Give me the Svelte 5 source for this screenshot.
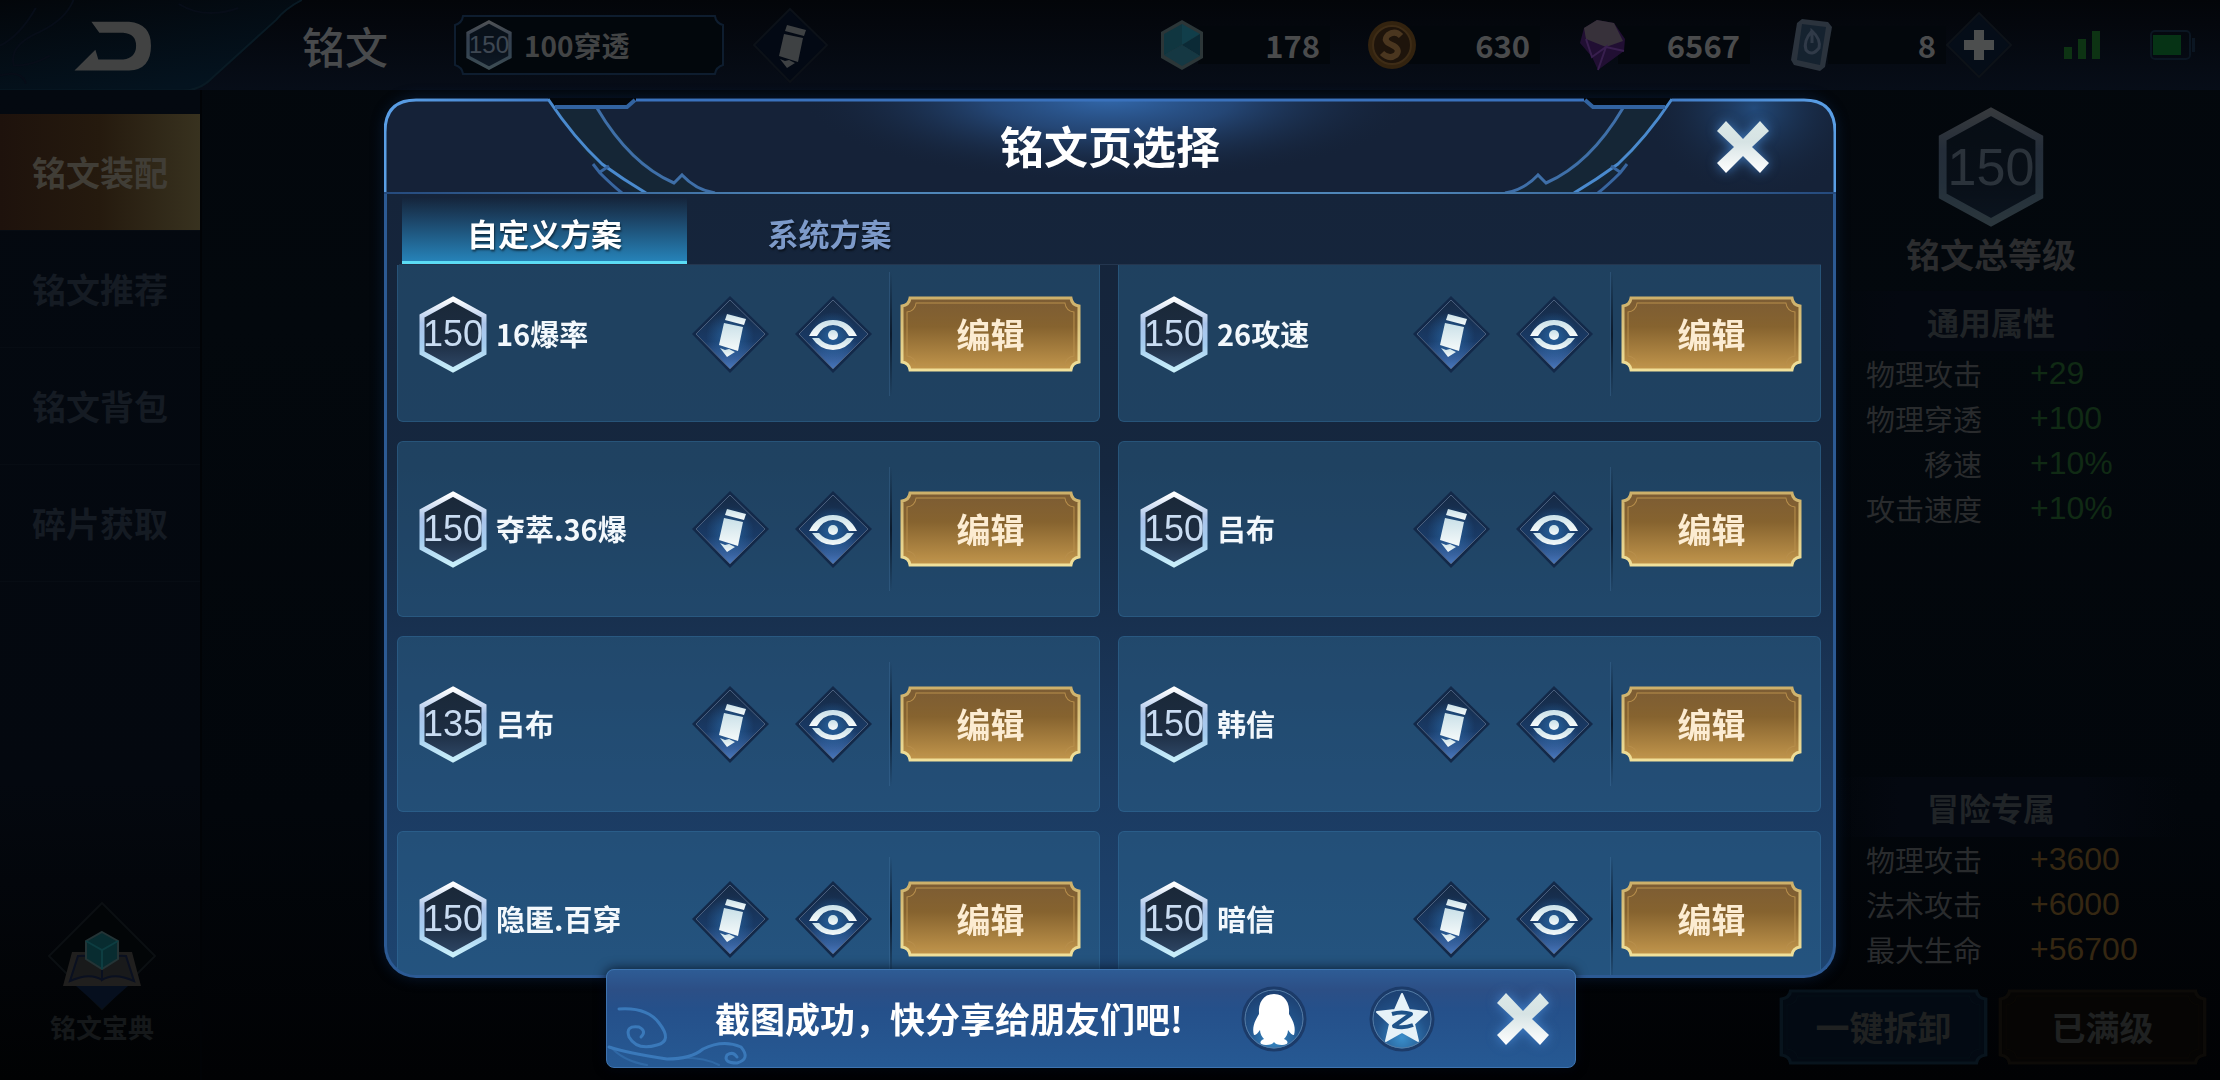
<script lang="ts">
    import { onMount } from "svelte"

    type Page = { level: number; name: string }
    type Stat = { label: string; value: string }

    const menu = ["铭文装配", "铭文推荐", "铭文背包", "碎片获取"]
    const tabs = ["自定义方案", "系统方案"]

    const pages: Page[] = [
        {level: 150, name: "16爆率"},
        {level: 150, name: "26攻速"},
        {level: 150, name: "夺萃.36爆"},
        {level: 150, name: "吕布"},
        {level: 135, name: "吕布"},
        {level: 150, name: "韩信"},
        {level: 150, name: "隐匿.百穿"},
        {level: 150, name: "暗信"},
    ]

    const common: Stat[] = [
        {label: "物理攻击", value: "+29"},
        {label: "物理穿透", value: "+100"},
        {label: "移速", value: "+10%"},
        {label: "攻击速度", value: "+10%"},
    ]

    const adventure: Stat[] = [
        {label: "物理攻击", value: "+3600"},
        {label: "法术攻击", value: "+6000"},
        {label: "最大生命", value: "+56700"},
    ]

    let activeMenu = $state(0)
    let activeTab = $state(0)
    let modalOpen = $state(true)
    let toastOpen = $state(true)
    let list: HTMLUListElement | undefined = $state()

    onMount(() => {
        if (list) list.scrollTop = 19
    })
</script>


{#snippet hexagon()}
    <svg class="hex-shape" viewBox="0 0 68 77" preserveAspectRatio="none" aria-hidden="true">
        <polygon points="34,3 65,20 65,57 34,74 3,57 3,20" fill="url(#hex-fill)" stroke="url(#hex-line)" stroke-width="5" />
    </svg>
{/snippet}

{#snippet diamond()}
    <polygon points="38,0 77,38 38,77 0,38" fill="#132949" />
    <polygon points="38,4 73,38 38,73 4,38" fill="url(#diamond-fill)" stroke="#4b5f7d" stroke-width="1" />
    <circle cx="38" cy="40" r="24" fill="url(#icon-glow)" />
{/snippet}

{#snippet pencil()}
    <svg class="diamond" viewBox="0 0 77 77" aria-hidden="true">
        {@render diamond()}
        <g fill="url(#icon-fill)">
            <path d="M35 18L54 23L52 29L33 24Z" />
            <path d="M32 27L51 31L46 55L27 49Z" />
            <path d="M28 52L33 54L37 53L43 56L35 61Z" />
        </g>
    </svg>
{/snippet}

{#snippet eye()}
    <svg class="diamond" viewBox="0 0 77 77" aria-hidden="true">
        {@render diamond()}
        <g fill="url(#icon-fill)">
            <path d="M14 40Q22 24 38 24Q54 24 62 40H54Q48 29 38 29Q28 29 22 40Z" />
            <path d="M17 42H24Q30 49 38 49Q46 49 52 42H59Q51 54 38 54Q25 54 17 42Z" />
            <circle cx="38" cy="39" r="5" />
        </g>
    </svg>
{/snippet}

{#snippet cross()}
    <svg class="cross" viewBox="0 0 52 52" aria-hidden="true">
        <path d="M9 0L26 18L43 0L52 10L35 26L52 42L43 52L26 35L9 52L0 42L17 26L0 10Z" fill="url(#cross-fill)" />
    </svg>
{/snippet}

{#snippet plate(fill: string, line: string, inner: string)}
    <svg class="plate" viewBox="0 0 180 76" preserveAspectRatio="none" aria-hidden="true">
        <path d="M10 2H170Q171 9 178 10V66Q171 67 170 74H10Q9 67 2 66V10Q9 9 10 2Z" fill={fill} stroke={line} stroke-width="3" />
        <path d="M16 7H164Q165 15 173 16V60Q165 61 164 69H16Q15 61 7 60V16Q15 15 16 7Z" fill="none" stroke={inner} stroke-width="1" />
    </svg>
{/snippet}

{#snippet stats(title: string, rows: Stat[], kind: string)}
    <section class="stats {kind}">
        <h3>{title}</h3>
        <dl>
            {#each rows as row}
                <div>
                    <dt>{row.label}</dt>
                    <dd>{row.value}</dd>
                </div>
            {/each}
        </dl>
    </section>
{/snippet}


<svg class="defs" aria-hidden="true">
    <defs>
        <linearGradient id="hex-line" x1="0" y1="0" x2="0" y2="1">
            <stop offset="0" stop-color="#ffffff" />
            <stop offset=".35" stop-color="#a9c3ea" />
            <stop offset=".65" stop-color="#a5cdf0" />
            <stop offset="1" stop-color="#c9effa" />
        </linearGradient>
        <linearGradient id="hex-fill" x1="0" y1="0" x2="0" y2="1">
            <stop offset="0" stop-color="#1a2838" />
            <stop offset=".6" stop-color="#1d2d42" />
            <stop offset="1" stop-color="#2f4867" />
        </linearGradient>
        <linearGradient id="diamond-fill" x1="0" y1="0" x2="0" y2="1">
            <stop offset="0" stop-color="#162a45" />
            <stop offset=".6" stop-color="#193a66" />
            <stop offset="1" stop-color="#4877bd" />
        </linearGradient>
        <radialGradient id="icon-glow">
            <stop offset="0" stop-color="#2f7cc4" stop-opacity=".6" />
            <stop offset="1" stop-color="#2f7cc4" stop-opacity="0" />
        </radialGradient>
        <linearGradient id="icon-fill" x1="0" y1="0" x2="0" y2="1">
            <stop offset="0" stop-color="#c9e0e8" />
            <stop offset="1" stop-color="#f6fafa" />
        </linearGradient>
        <linearGradient id="cross-fill" x1="0" y1="0" x2="0" y2="1">
            <stop offset="0" stop-color="#dbe8e6" />
            <stop offset=".4" stop-color="#d6e3e4" />
            <stop offset="1" stop-color="#ffffff" />
        </linearGradient>
        <linearGradient id="gold" x1="0" y1="0" x2="0" y2="1">
            <stop offset="0" stop-color="#7c5c34" />
            <stop offset=".4" stop-color="#86632f" />
            <stop offset="1" stop-color="#c2964c" />
        </linearGradient>
        <linearGradient id="gold-line" x1="0" y1="0" x2="0" y2="1">
            <stop offset="0" stop-color="#cdb06a" />
            <stop offset="1" stop-color="#f0e09a" />
        </linearGradient>
        <radialGradient id="badge-fill" cx=".5" cy=".8" r=".7">
            <stop offset="0" stop-color="#3a8fcb" />
            <stop offset=".6" stop-color="#225289" />
            <stop offset="1" stop-color="#1d4274" />
        </radialGradient>
    </defs>
</svg>

<div class="screen">
    <header>
        <button class="back" aria-label="返回">
            <svg viewBox="0 0 304 92" aria-hidden="true">
                <defs>
                    <linearGradient id="back-fill" x1="0" y1="0" x2=".5" y2="1">
                        <stop offset="0" stop-color="#03060a" />
                        <stop offset="1" stop-color="#04131f" />
                    </linearGradient>
                </defs>
                <path d="M0 0H304Q288 8 278 20L214 78Q202 91 184 91H0Z" fill="url(#back-fill)" />
                <path d="M304 0Q288 8 278 20L214 78Q202 91 184 91H0" fill="none" stroke="#091a24" stroke-width="2" />
                <path d="M74 0Q66 20 40 32Q8 46 14 66Q34 66 50 56M0 46Q20 36 36 8M0 76Q22 70 26 84M180 4Q206 20 240 8" fill="none" stroke="#070d18" stroke-width="2" />
                <path d="M92 22H130Q152 24 152 46Q152 70 130 71H75L96 50L99 60H124Q137 58 137 46Q137 34 124 33H100Z" fill="#414242" />
            </svg>
        </button>
        <h1>铭文</h1>
        <button class="current">
            <svg class="frame" viewBox="0 0 268 60" preserveAspectRatio="none" aria-hidden="true">
                <path d="M9 1H259Q260 8 267 10V50Q260 52 259 59H9Q8 52 1 50V10Q8 8 9 1Z" fill="#02070c" stroke="#0e1d2f" stroke-width="2" />
            </svg>
            <span class="level small">{@render hexagon()}<b>150</b></span>
            <span class="current-name">100穿透</span>
        </button>
        <button class="rename" aria-label="重命名">
            <svg viewBox="0 0 77 77" aria-hidden="true">
                <polygon points="38,2 75,38 38,75 2,38" fill="#030914" stroke="#0c1118" stroke-width="2" />
                <g fill="#3e4143">
                    <path d="M35 18L54 23L52 29L33 24Z" />
                    <path d="M32 27L51 31L46 55L27 49Z" />
                    <path d="M28 52L33 54L37 53L43 56L35 61Z" />
                </g>
            </svg>
        </button>

        <ul class="wallet">
            <li>
                <svg viewBox="0 0 48 52" aria-hidden="true">
                    <polygon points="24,1 45,13 45,39 24,51 3,39 3,13" fill="#2c3638" />
                    <polygon points="24,5 24,26 6,36 6,15" fill="#103640" />
                    <polygon points="24,5 42,15 24,26" fill="#113e4a" />
                    <polygon points="42,15 42,37 24,26" fill="#0b2a36" />
                    <polygon points="24,26 42,37 24,47 6,36" fill="#153843" />
                </svg>
                <span>178</span>
            </li>
            <li>
                <svg viewBox="0 0 48 52" aria-hidden="true">
                    <circle cx="24" cy="26" r="24" fill="#33230f" />
                    <circle cx="24" cy="26" r="19" fill="#1e140b" stroke="#3e2c16" stroke-width="2" />
                    <path d="M33 17Q27 11 20 16Q14 22 24 26Q33 30 28 36Q21 41 14 34" fill="none" stroke="#4a361f" stroke-width="6" />
                </svg>
                <span>630</span>
            </li>
            <li>
                <svg viewBox="0 0 48 52" aria-hidden="true">
                    <polygon points="6,9 19,1 36,4 47,20 46,32 20,51 14,38 2,24" fill="#210f33" />
                    <polygon points="6,9 19,1 36,4 45,22 28,28 8,20" fill="#37313a" />
                    <path d="M8 20L14 38L28 28L20 51M28 28L46 32" fill="none" stroke="#381f4e" stroke-width="2" />
                </svg>
                <span>6567</span>
            </li>
            <li class="last">
                <svg viewBox="0 0 48 52" aria-hidden="true">
                    <polygon points="14,0 40,3 44,8 37,48 32,52 6,46 3,41 9,4" fill="#2b333d" />
                    <polygon points="14,5 38,8 32,46 9,41" fill="#15222f" />
                    <path d="M24 12Q15 22 18 31Q24 38 31 29Q33 20 24 12V24" fill="none" stroke="#303a48" stroke-width="3" />
                </svg>
                <span>8</span>
            </li>
        </ul>
        <button class="add" aria-label="增加">
            <svg viewBox="0 0 66 66" aria-hidden="true">
                <polygon points="33,1 65,33 33,65 1,33" fill="#050d18" stroke="#0d1218" stroke-width="2" />
                <path d="M28 18H38V28H48V38H38V48H28V38H18V28H28Z" fill="#4c4e4e" />
            </svg>
        </button>
        <svg class="signal" viewBox="0 0 38 28" aria-hidden="true">
            <path d="M0 16H8V28H0ZM14 8H22V28H14ZM28 0H36V28H28Z" fill="#0d3313" />
        </svg>
        <svg class="battery" viewBox="0 0 46 30" aria-hidden="true">
            <rect x="1" y="1" width="39" height="28" rx="4" fill="none" stroke="#0b1622" stroke-width="2" />
            <rect x="42" y="8" width="3" height="14" fill="#0b1622" />
            <rect x="3" y="5" width="28" height="20" fill="#063315" />
        </svg>
    </header>

    <div class="content">
        <nav>
            {#each menu as item, i}
                <button class:active={activeMenu == i} onclick={() => activeMenu = i}>{item}</button>
            {/each}
            <a class="codex" href="#codex">
                <svg viewBox="0 0 116 116" aria-hidden="true">
                    <polygon points="58,5 111,58 58,111 5,58" fill="#020507" stroke="#0b0f12" stroke-width="2" />
                    <polygon points="58,111 32,88 84,88" fill="#060f1e" />
                    <path d="M28 54H88L97 88H19Z" fill="#201f1e" />
                    <path d="M58 82Q46 74 26 83L34 58Q50 56 58 66Q66 56 82 58L90 83Q70 74 58 82V64" fill="#191a1b" stroke="#0a1020" stroke-width="2" />
                    <polygon points="58,34 74,43 74,61 58,71 42,61 42,43" fill="#082c30" stroke="#243436" stroke-width="2" />
                    <path d="M42 43L58 52L74 43M58 52V71" fill="none" stroke="#0d3d41" stroke-width="2" />
                </svg>
                <span>铭文宝典</span>
            </a>
        </nav>

        <aside>
            <div class="total">
                <span class="level large">{@render hexagon()}<b>150</b></span>
                <h2>铭文总等级</h2>
            </div>
            {@render stats("通用属性", common, "common")}
            {@render stats("冒险专属", adventure, "adventure")}
            <div class="actions">
                <button>{@render plate("#030a13", "#08141d", "#050e16")}<span>一键拆卸</span></button>
                <button>{@render plate("#060504", "#0d0b08", "#0a0805")}<span>已满级</span></button>
            </div>
        </aside>
    </div>
</div>

{#if modalOpen}
    <div class="overlay">
        <div class="modal" role="dialog" aria-labelledby="modal-title">
            <div class="modal-head">
                <svg class="head-frame" viewBox="0 0 1452 96" preserveAspectRatio="none" aria-hidden="true">
                    <defs>
                        <radialGradient id="head-glow" gradientUnits="userSpaceOnUse" cx="0" cy="0" r="1" gradientTransform="translate(726 0) scale(310 84)">
                            <stop offset="0" stop-color="#3268ab" />
                            <stop offset=".4" stop-color="#284f84" stop-opacity=".8" />
                            <stop offset="1" stop-color="#152238" stop-opacity="0" />
                        </radialGradient>
                        <radialGradient id="close-glow" gradientUnits="userSpaceOnUse" cx="0" cy="0" r="1" gradientTransform="translate(1370 10) scale(110 90)">
                            <stop offset="0" stop-color="#234a7a" />
                            <stop offset="1" stop-color="#152238" stop-opacity="0" />
                        </radialGradient>
                        <linearGradient id="edge" x1="0" y1="0" x2="1" y2="0">
                            <stop offset="0" stop-color="#5a9fe6" />
                            <stop offset=".15" stop-color="#3a72bd" />
                            <stop offset=".85" stop-color="#3a72bd" />
                            <stop offset="1" stop-color="#5a9fe6" />
                        </linearGradient>
                        <linearGradient id="rule" gradientUnits="userSpaceOnUse" x1="0" y1="0" x2="1452" y2="0">
                            <stop offset="0" stop-color="#254a7d" />
                            <stop offset=".3" stop-color="#4f86b8" />
                            <stop offset=".7" stop-color="#4f86b8" />
                            <stop offset="1" stop-color="#254a7d" />
                        </linearGradient>
                        <g id="corner" fill="none">
                            <path d="M164 2L172 9Q210 80 250 95H330Q310 88 298 78L290 85Q250 60 213 10H172Z" fill="#152636" />
                            <path d="M164 1Q190 40 218 66Q240 82 262 95" stroke="#4a8ace" stroke-width="3" />
                            <path d="M213 10Q246 66 290 85L298 77Q312 92 331 95" stroke="#3f6fa8" stroke-width="3" />
                            <path d="M209 66L216 75Q228 87 238 95M216 74L225 68" stroke="#3866a0" stroke-width="3" />
                        </g>
                    </defs>
                    <path d="M1 96V34Q1 2 32 2H164L172 9H243L252 2H1200L1209 9H1280L1288 2H1420Q1451 2 1451 34V96Z" fill="#152238" />
                    <path d="M252 2H1200V95H252Z" fill="url(#head-glow)" />
                    <path d="M1288 2H1420Q1451 2 1451 34V95H1230Z" fill="url(#close-glow)" />
                    <use href="#corner" />
                    <use href="#corner" transform="translate(1452 0) scale(-1 1)" />
                    <path d="M1 96V34Q1 2 32 2H164M252 2H1200M1288 2H1420Q1451 2 1451 34V96" fill="none" stroke="url(#edge)" stroke-width="3" />
                    <path d="M171 9H243L251 2M1201 2L1209 9H1281" fill="none" stroke="#3263a0" stroke-width="4" />
                    <path d="M0 95H1452" stroke="url(#rule)" stroke-width="2" />
                </svg>
                <h2 id="modal-title">铭文页选择</h2>
                <button class="close" aria-label="关闭" onclick={() => modalOpen = false}>{@render cross()}</button>
            </div>

            <div class="modal-body">
                <div class="tabs" role="tablist">
                    {#each tabs as tab, i}
                        <button role="tab" aria-selected={activeTab == i} class:active={activeTab == i} onclick={() => activeTab = i}>{tab}</button>
                    {/each}
                </div>
                <ul class="pages" bind:this={list}>
                    {#each pages as page}
                        <li>
                            <span class="level">{@render hexagon()}<b>{page.level}</b></span>
                            <span class="page-name">{page.name}</span>
                            <button class="icon" aria-label="重命名">{@render pencil()}</button>
                            <button class="icon" aria-label="查看">{@render eye()}</button>
                            <span class="divider"></span>
                            <button class="edit">{@render plate("url(#gold)", "url(#gold-line)", "#b88f4c")}<span>编辑</span></button>
                        </li>
                    {/each}
                </ul>
            </div>
        </div>
    </div>
{/if}

{#if toastOpen}
    <div class="toast-area">
        <div class="toast" role="status">
            <svg class="swirl" viewBox="0 0 150 98" aria-hidden="true">
                <g fill="none" stroke="#3a79ba" stroke-linecap="round">
                    <path d="M12 40Q40 38 52 54Q66 72 50 76Q30 82 22 68Q18 56 32 58Q40 62 34 68" stroke-width="3" />
                    <path d="M2 78Q20 84 60 90Q84 90 96 80Q116 70 134 78Q144 90 130 94Q116 94 120 86Q126 82 130 88" stroke-width="3" />
                    <path d="M60 90Q92 86 112 96M4 78Q16 92 40 96" stroke-width="2" opacity=".5" />
                </g>
            </svg>
            <p>截图成功，快分享给朋友们吧!</p>
            <button class="share" aria-label="QQ">
                <svg viewBox="0 0 66 66" aria-hidden="true">
                    <circle cx="33" cy="33" r="31" fill="url(#badge-fill)" stroke="#1c3b69" stroke-width="3" />
                    <circle cx="33" cy="33" r="29" fill="none" stroke="#557ca5" stroke-width="1" />
                    <path d="M33 8C22 8 17 17 18 28C13 36 11 42 13 49C15 49 17 47 19 44C19 48 21 51 23 53C18 55 18 59 25 59C29 59 32 58 33 56C34 58 37 59 41 59C48 59 48 55 43 53C45 51 47 48 47 44C49 47 51 49 53 49C55 42 53 36 48 28C49 17 44 8 33 8Z" fill="#fff" />
                </svg>
            </button>
            <button class="share" aria-label="QQ空间">
                <svg viewBox="0 0 66 66" aria-hidden="true">
                    <circle cx="33" cy="33" r="31" fill="url(#badge-fill)" stroke="#1c3b69" stroke-width="3" />
                    <circle cx="33" cy="33" r="29" fill="none" stroke="#557ca5" stroke-width="1" />
                    <path d="M33 8L40 24L58 26L45 38L49 55L33 46L17 55L21 38L8 26L26 24Z" fill="#e6f2f8" stroke="#e6f2f8" stroke-width="2" stroke-linejoin="round" />
                    <path d="M23 28Q33 25 42 28L25 40Q34 43 44 39" fill="none" stroke="#1e5288" stroke-width="4" stroke-linejoin="round" />
                </svg>
            </button>
            <button class="close" aria-label="关闭" onclick={() => toastOpen = false}>{@render cross()}</button>
        </div>
    </div>
{/if}


<style>
    :global(body) {
        background: #02060a;
        overflow: hidden;
        font-family: "Noto Sans CJK SC", "Noto Sans", sans-serif;
        font-weight: 700;
    }

    h1, h2, h3, p, ul, dl, dd {
        margin: 0;
        padding: 0;
        font-weight: 700;
    }

    li {
        list-style: none;
    }

    button {
        padding: 0;
        background: none;
        border: none;
        color: inherit;
        cursor: pointer;
        font: inherit;
    }

    svg {
        display: block;
    }

    .defs {
        position: absolute;
        width: 0;
        height: 0;
    }

    .screen {
        display: flex;
        flex-direction: column;
        min-height: 100vh;
        background: linear-gradient(#03070c, #03080d 30%, #02060b 75%, #010204);
    }

    /* top bar */
    header {
        display: flex;
        align-items: center;
        height: 90px;
        background: linear-gradient(#030509, #070d18);
        color: #4a4b4c;
    }

    .back {
        align-self: flex-start;
        width: 302px;
    }

    h1 {
        width: 152px;
        font-size: 43px;
        font-weight: 500;
        line-height: 60px;
        color: #484a4c;
    }

    .current {
        position: relative;
        display: flex;
        align-items: center;
        gap: 12px;
        width: 270px;
        height: 60px;
        padding-left: 12px;
        font-size: 28px;
        color: #424445;
    }

    .frame, .plate, .head-frame {
        position: absolute;
        inset: 0;
        width: 100%;
        height: 100%;
    }

    .current-name {
        position: relative;
    }

    .level {
        position: relative;
        display: grid;
        place-items: center;
        flex: none;
        width: 68px;
        height: 77px;
        font-family: "Liberation Sans", Arial, sans-serif;
        font-size: 36px;
        line-height: 36px;
    }

    .level b {
        position: relative;
        font-weight: 400;
        color: #c9dcf2;
    }

    .hex-shape {
        position: absolute;
        inset: 0;
        width: 100%;
        height: 100%;
    }

    .level.small {
        width: 46px;
        height: 50px;
        font-size: 24px;
        opacity: .3;
    }

    .level.large {
        width: 106px;
        height: 120px;
        font-size: 52px;
        line-height: 52px;
        opacity: .2;
    }

    .icon {
        flex: none;
        width: 77px;
    }

    .rename {
        width: 77px;
        margin-left: 28px;
    }

    .wallet {
        display: flex;
        gap: 38px;
        margin-left: auto;
        font-size: 31px;
        line-height: 38px;
    }

    .wallet li {
        display: flex;
        align-items: center;
        width: 172px;
    }

    .wallet svg {
        width: 48px;
        margin-right: -8px;
        z-index: 1;
    }

    .wallet span {
        flex: 1;
        padding-right: 10px;
        text-align: right;
        background: #03070c;
    }

    .wallet .last {
        width: 158px;
    }

    .add {
        width: 66px;
    }

    .signal {
        width: 38px;
        margin: 0 48px 0 52px;
    }

    .battery {
        width: 46px;
        margin-right: 24px;
    }

    /* side menu and stats */
    .content {
        flex: 1;
        display: flex;
        justify-content: space-between;
    }

    nav {
        display: flex;
        flex-direction: column;
        width: 202px;
        padding-top: 24px;
        box-sizing: border-box;
        background: linear-gradient(#040910, #04080f 70%, #010203);
        border-right: 2px solid #010306;
    }

    nav button {
        height: 117px;
        padding-bottom: 2px;
        font-size: 34px;
        color: #151b23;
        border-bottom: 1px solid #070c13;
    }

    nav .active {
        background: linear-gradient(90deg, #1e120c, #251a0e 50%, #38321f);
        color: #403d36;
    }

    .codex {
        display: flex;
        flex-direction: column;
        align-items: center;
        margin-top: auto;
        padding: 0 0 32px 4px;
        font-size: 26px;
        line-height: 42px;
        color: #15181a;
        text-decoration: none;
    }

    .codex svg {
        width: 116px;
        margin-bottom: -8px;
    }

    aside {
        display: flex;
        flex-direction: column;
        width: 458px;
        padding: 17px 0 15px;
        box-sizing: border-box;
    }

    .total {
        display: flex;
        flex-direction: column;
        align-items: center;
        gap: 6px;
        margin-bottom: 16px;
        color: #2b2c2e;
    }

    .total h2 {
        font-size: 34px;
        line-height: 42px;
    }

    .stats h3 {
        font-size: 32px;
        line-height: 60px;
        text-align: center;
        color: #202427;
        background: linear-gradient(90deg, transparent 16%, #040810 30%, #040810 70%, transparent 92%);
    }

    .stats div {
        display: flex;
        gap: 48px;
        line-height: 45px;
    }

    .stats dt {
        width: 220px;
        font-size: 29px;
        font-weight: 400;
        text-align: right;
        color: #292b2d;
    }

    .stats dd {
        font-family: "Liberation Sans", Arial, sans-serif;
        font-size: 32px;
        font-weight: 400;
        color: #102a14;
    }

    .adventure {
        margin-top: auto;
    }

    .adventure dd {
        color: #352712;
    }

    .actions {
        display: flex;
        justify-content: flex-end;
        gap: 10px;
        margin: 17px 13px 0 0;
        font-size: 34px;
        color: #1f2121;
    }

    .actions button {
        position: relative;
        width: 209px;
        height: 76px;
        padding-bottom: 2px;
    }

    .actions span, .edit span {
        position: relative;
    }

    /* page picker */
    .overlay {
        position: fixed;
        inset: 0;
        display: flex;
        justify-content: center;
        padding: 98px 24px 102px;
    }

    .modal {
        display: flex;
        flex-direction: column;
        width: 100%;
        max-width: 1452px;
        border-radius: 32px;
        box-shadow: 0 0 14px rgba(20, 60, 120, .35);
    }

    .modal-head {
        position: relative;
        display: flex;
        align-items: center;
        justify-content: center;
        flex: none;
        height: 96px;
        color: #fff;
    }

    .modal-head h2 {
        position: relative;
        padding-bottom: 2px;
        font-size: 44px;
        line-height: 60px;
    }

    .modal-head .close {
        position: absolute;
        right: 67px;
        top: 23px;
    }

    .close {
        width: 52px;
        filter: drop-shadow(0 0 6px rgba(80, 150, 230, .7));
    }

    .modal-body {
        flex: 1;
        display: flex;
        flex-direction: column;
        min-height: 0;
        padding: 0 12px;
        overflow: hidden;
        background: linear-gradient(#15243a, #15273f 35%, #1b3a60 75%, #1d4470);
        border: solid #2c5a94;
        border-width: 0 3px 3px;
        border-radius: 0 0 32px 32px;
    }

    .tabs {
        display: flex;
        flex: none;
        height: 70px;
        padding-left: 3px;
        font-size: 31px;
        color: #7d9ac9;
        border-bottom: 1px solid #24364f;
    }

    .tabs button {
        width: 285px;
        padding-top: 10px;
        border-bottom: 3px solid transparent;
        text-shadow: 1px 2px 2px rgba(0, 0, 0, .5);
    }

    .tabs .active {
        color: #fff;
        background: linear-gradient(transparent 5%, #1c4669 40%, #2682b8);
        border-bottom-color: #5bdcf5;
    }

    .pages {
        flex: 1;
        display: grid;
        grid-template-columns: 1fr 1fr;
        gap: 19px 18px;
        grid-auto-rows: 176px;
        min-height: 0;
        margin-left: -2px;
        overflow-y: auto;
        scrollbar-width: none;
    }

    .pages li {
        display: flex;
        align-items: center;
        padding: 0 18px 0 21px;
        background: rgba(48, 108, 150, .4);
        border: 1px solid rgba(60, 125, 180, .3);
        border-radius: 6px;
    }

    .page-name {
        flex: 1;
        padding: 0 0 2px 9px;
        font-size: 29px;
        color: #f3f8fc;
    }

    .pages .icon + .icon {
        margin-left: 26px;
    }

    .divider {
        width: 2px;
        height: 124px;
        margin: 0 8px 0 18px;
        background: linear-gradient(transparent, #0b1a2c 50%, transparent);
        box-shadow: -1px 0 0 rgba(80, 130, 180, .25);
    }

    .edit {
        position: relative;
        width: 181px;
        height: 76px;
        padding-bottom: 2px;
        font-size: 34px;
        color: #fcecd2;
    }

    /* share notice */
    .toast-area {
        position: fixed;
        inset: auto 38px 12px 0;
        display: flex;
        justify-content: center;
    }

    .toast {
        position: relative;
        display: flex;
        align-items: center;
        width: 970px;
        height: 99px;
        padding: 0 26px 0 108px;
        box-sizing: border-box;
        background: linear-gradient(#2e5c95, #2c4f86 20%, #25508a 40%, #265993);
        border: 1px solid #3e74b0;
        border-radius: 8px;
        box-shadow: 0 0 12px rgba(0, 8, 20, .8);
        color: #fff;
    }

    .swirl {
        position: absolute;
        left: 0;
        bottom: 0;
        width: 150px;
    }

    .toast p {
        position: relative;
        flex: 1;
        padding-bottom: 2px;
        font-size: 35px;
        line-height: 48px;
        white-space: nowrap;
    }

    .share {
        width: 66px;
        margin-right: 62px;
    }
</style>
